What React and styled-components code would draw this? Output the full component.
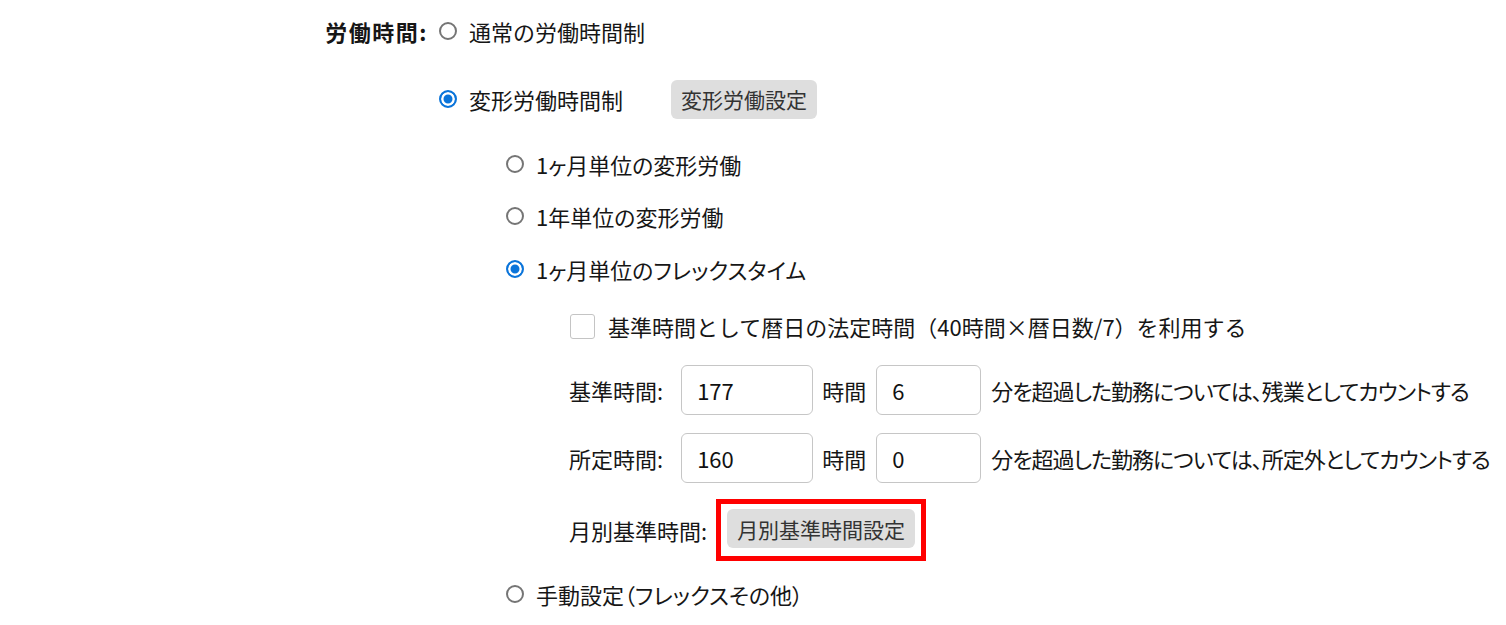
import React from 'react';
import styled, { createGlobalStyle } from 'styled-components';

const GlobalStyle = createGlobalStyle`
  body {
    margin: 0;
    background: #fff;
    color: #161616;
    font-family: "Noto Sans CJK JP", "Noto Sans", sans-serif;
    font-size: 22px;
    overflow: hidden;
  }
`;

function App() {
  return (
    <>
      <GlobalStyle />
      <Field>
        <FieldLabel>労働時間:</FieldLabel>
        <Options>
          <Row>
            <Choice>
              <Radio role="radio" aria-checked="false" />
              <span>通常の労働時間制</span>
            </Choice>
          </Row>
          <Row $mt={28}>
            <Choice>
              <Radio role="radio" aria-checked="true" $checked />
              <span>変形労働時間制</span>
            </Choice>
            <GrayButton $ml={48}>変形労働設定</GrayButton>
          </Row>
          <SubOptions>
            <Row $mt={25}>
              <Choice>
                <Radio role="radio" aria-checked="false" />
                <Prop>1ヶ月単位の変形労働</Prop>
              </Choice>
            </Row>
            <Row $mt={12}>
              <Choice>
                <Radio role="radio" aria-checked="false" />
                <Prop>1年単位の変形労働</Prop>
              </Choice>
            </Row>
            <Row $mt={13}>
              <Choice>
                <Radio role="radio" aria-checked="true" $checked />
                <Prop>1ヶ月単位のフレックスタイム</Prop>
              </Choice>
            </Row>
            <Details>
              <Row $mt={17}>
                <Choice>
                  <Check role="checkbox" aria-checked="false" />
                  <span>基準時間として暦日の法定時間（40時間×暦日数/7）を利用する</span>
                </Choice>
              </Row>
              <InputRow $mt={19}>
                <InlineLabel>基準時間:</InlineLabel>
                <NumberBox $w={132} defaultValue="177" />
                <Unit>時間</Unit>
                <NumberBox $w={105} defaultValue="6" />
                <Note>分を超過した勤務については、残業としてカウントする</Note>
              </InputRow>
              <InputRow $mt={18}>
                <InlineLabel>所定時間:</InlineLabel>
                <NumberBox $w={132} defaultValue="160" />
                <Unit>時間</Unit>
                <NumberBox $w={105} defaultValue="0" />
                <Note>分を超過した勤務については、所定外としてカウントする</Note>
              </InputRow>
              <Row $mt={16}>
                <span>月別基準時間:</span>
                <Highlight>
                  <GrayButton>月別基準時間設定</GrayButton>
                </Highlight>
              </Row>
            </Details>
            <Row $mt={13}>
              <Choice>
                <Radio role="radio" aria-checked="false" />
                <Prop>手動設定（フレックスその他）</Prop>
              </Choice>
            </Row>
          </SubOptions>
        </Options>
      </Field>
    </>
  );
}

export default App;

const Field = styled.div`
  display: flex;
  align-items: flex-start;
  padding-top: 11px;
`;

const FieldLabel = styled.div`
  flex: none;
  width: 428px;
  text-align: right;
  font-weight: bold;
  line-height: 40px;
  letter-spacing: 1.5px;
`;

const Options = styled.div`
  flex: none;
  display: flex;
  flex-direction: column;
  padding-left: 11px;
`;

const SubOptions = styled.div`
  display: flex;
  flex-direction: column;
  padding-left: 67px;
`;

const Details = styled.div`
  display: flex;
  flex-direction: column;
  padding-left: 63px;
`;

const Row = styled.div`
  display: flex;
  align-items: center;
  min-height: 40px;
  margin-top: ${p => p.$mt || 0}px;
  white-space: nowrap;

  & > * {
    flex: none;
  }
`;

const InputRow = styled(Row)`
  min-height: 50px;
`;

const Choice = styled.label`
  display: flex;
  align-items: center;
  gap: 12px;
`;

const Prop = styled.span`
  font-feature-settings: "palt";
`;

const Radio = styled.span`
  display: block;
  flex: none;
  width: 18px;
  height: 18px;
  border-radius: 50%;
  box-sizing: border-box;
  border: 2px solid ${p => (p.$checked ? '#0a74da' : '#757575')};
  background: ${p => (p.$checked ? '#0a74da' : '#fff')};
  box-shadow: ${p => (p.$checked ? 'inset 0 0 0 2.5px #fff' : 'none')};
`;

const Check = styled.span`
  display: block;
  flex: none;
  margin: 0 1px;
  width: 25px;
  height: 25px;
  border: 1px solid #c4c4c4;
  border-radius: 3px;
  background: #fff;
  box-sizing: border-box;
`;

const GrayButton = styled.button`
  font-family: inherit;
  font-size: 21px;
  color: #333;
  background: #dedede;
  border: none;
  border-radius: 6px;
  height: 39px;
  padding: 0 10px;
  margin-left: ${p => p.$ml || 0}px;
`;

const Highlight = styled.div`
  display: flex;
  border: 5px solid #ff0000;
  padding: 5px 6px 8px 6px;
  margin-left: 9px;
`;

const InlineLabel = styled.span`
  margin-right: 18px;
`;

const NumberBox = styled.input`
  font-family: inherit;
  font-size: 22px;
  color: #111;
  width: ${p => p.$w}px;
  height: 50px;
  box-sizing: border-box;
  border: 1px solid #c6c6c6;
  border-radius: 6px;
  padding: 0 15px;
  outline: none;
`;

const Unit = styled.span`
  margin: 0 10px 0 9px;
`;

const Note = styled.span`
  margin-left: 10px;
  font-feature-settings: "palt";
  letter-spacing: -1px;
`;
